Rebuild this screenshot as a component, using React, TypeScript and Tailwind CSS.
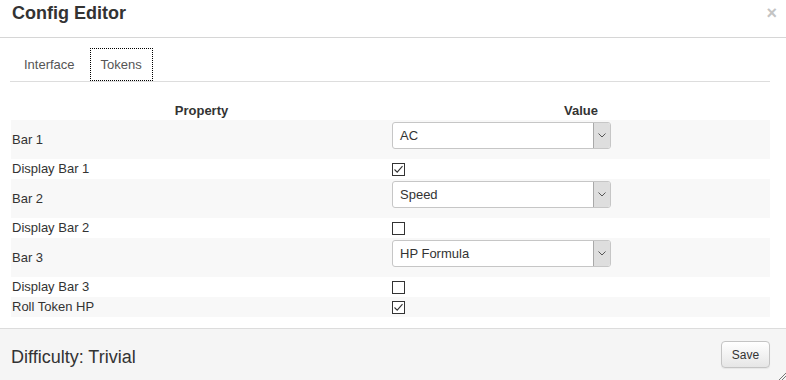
import React from "react";

type Row = {
    label: string;
    kind: "select" | "check";
    value?: string;
    checked?: boolean;
};

const rows: Row[] = [
    { label: "Bar 1", kind: "select", value: "AC" },
    { label: "Display Bar 1", kind: "check", checked: true },
    { label: "Bar 2", kind: "select", value: "Speed" },
    { label: "Display Bar 2", kind: "check", checked: false },
    { label: "Bar 3", kind: "select", value: "HP Formula" },
    { label: "Display Bar 3", kind: "check", checked: false },
    { label: "Roll Token HP", kind: "check", checked: true },
];

function Select({ value }: { value: string }) {
    return (
        <div className="w-[219px] h-[27px] border border-[#c6c6c6] rounded-[3px] bg-white flex items-stretch">
            <div className="flex-1 flex items-center pl-[7px] text-[13px] text-[#333]">
                {value}
            </div>
            <div className="w-[17px] border-l border-[#a9a9a9] bg-[#dedede] rounded-r-[2px] flex items-center justify-center">
                <svg width="8" height="5" viewBox="0 0 8 5">
                    <path d="M0.5 0.5 L4 4 L7.5 0.5" fill="none" stroke="#555" strokeWidth="1" />
                </svg>
            </div>
        </div>
    );
}

function Check({ checked }: { checked: boolean }) {
    return (
        <div className="w-[13px] h-[13px] border border-[#333] bg-white flex items-center justify-center">
            {checked && (
                <svg width="11" height="11" viewBox="0 0 11 11">
                    <path d="M1.5 5.5 L4.2 8.2 L9.5 2.2" fill="none" stroke="#333" strokeWidth="1.1" />
                </svg>
            )}
        </div>
    );
}

export default function App() {
    return (
        <div className="relative w-[786px] h-[380px] bg-white flex flex-col font-['Liberation_Sans',Arial,sans-serif] text-[#333]">
            <div className="h-[38px] shrink-0 border-b border-[#d6d6d6] flex items-start justify-between pl-[12px] pr-[9px]">
                <span className="text-[18px] font-bold leading-[22px] mt-[2px]">Config Editor</span>
                <span className="text-[18px] font-bold leading-[22px] mt-[2px] text-[#c4c4c4]">×</span>
            </div>

            <div className="pl-[10px] pr-[16px]">
                <div className="mt-[10px] flex border-b border-[#ddd] text-[13px] text-[#555]">
                    <div className="h-[33px] flex items-center pl-[14px] pr-[13px]">Interface</div>
                    <div className="h-[33px] flex items-center px-[10px] ml-[2px] border border-dotted border-black bg-white">
                        Tokens
                    </div>
                </div>

                <div className="mt-[20px] h-[18px] flex text-[13px] font-bold leading-[18px] pl-[1px]">
                    <div className="w-[381px] text-center">Property</div>
                    <div className="flex-1 text-center">Value</div>
                </div>

                <div className="pl-[1px] text-[13px]">
                    {rows.map((row, i) => (
                        <div
                            key={row.label}
                            className={
                                "flex items-center " +
                                (i % 2 === 0 ? "bg-[#f8f8f8] " : "bg-white ") +
                                (row.kind === "select" ? "h-[39px]" : "h-[20px]")
                            }
                        >
                            <div className="w-[381px] pl-[1px]">{row.label}</div>
                            <div className="flex-1">
                                {row.kind === "select" ? (
                                    <div className="pt-[2px] pb-[10px]">
                                        <Select value={row.value ?? ""} />
                                    </div>
                                ) : (
                                    <div className="pt-[1px]">
                                        <Check checked={!!row.checked} />
                                    </div>
                                )}
                            </div>
                        </div>
                    ))}
                </div>
            </div>

            <div className="mt-auto h-[52px] border-t border-[#dcdcdc] bg-[#f5f5f5] flex items-start justify-between pl-[11px] pr-[16px]">
                <span className="mt-[17px] text-[18px] leading-[22px] text-[#333]">Difficulty: Trivial</span>
                <button
                    type="button"
                    className="mt-[12px] w-[49px] h-[27px] border border-[#c4c4c4] rounded-[4px] bg-linear-to-b from-white to-[#e6e6e6] text-[12px] text-[#333] shadow-[0_1px_1px_rgba(0,0,0,0.06)]"
                >
                    Save
                </button>
            </div>

            <svg className="absolute right-0 bottom-0" width="8" height="8" viewBox="0 0 8 8">
                <path d="M8 1 L1 8 M8 4 L4 8" stroke="#777" strokeWidth="1" />
            </svg>
        </div>
    );
}
